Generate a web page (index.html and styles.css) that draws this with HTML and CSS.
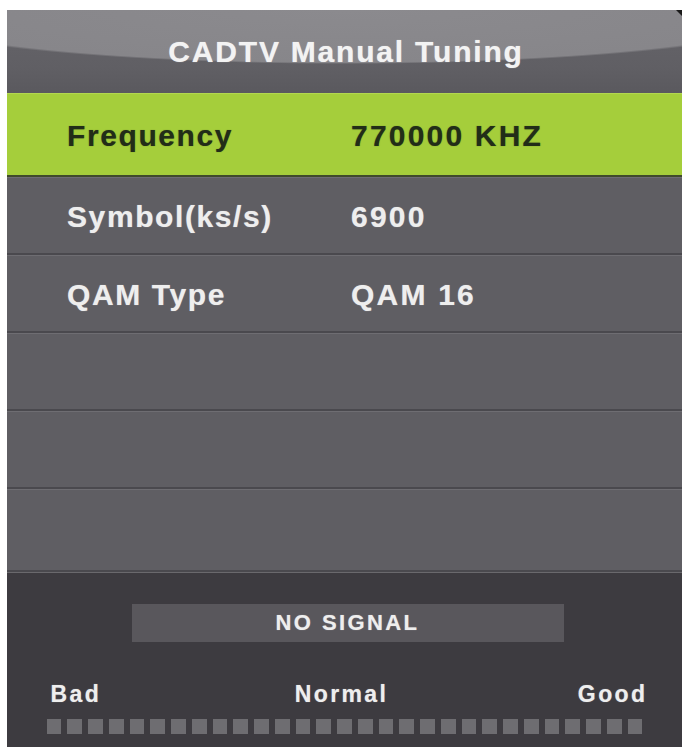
FILE: index.html
```html
<!DOCTYPE html>
<html lang="en">
<head>
<meta charset="utf-8">
<title>CADTV Manual Tuning</title>
<link rel="stylesheet" href="styles.css">
</head>
<body>
<div class="panel">
  <div class="header">CADTV Manual Tuning</div>
  <div class="row row-active">
    <span class="label">Frequency</span>
    <span class="value">770000 KHZ</span>
  </div>
  <div class="row">
    <span class="label">Symbol(ks/s)</span>
    <span class="value">6900</span>
  </div>
  <div class="row">
    <span class="label">QAM Type</span>
    <span class="value">QAM 16</span>
  </div>
  <div class="row"></div>
  <div class="row"></div>
  <div class="row row-last"></div>
  <div class="signal">
    <div class="signal-bar">NO SIGNAL</div>
    <div class="scale-labels">
      <span class="lbl-bad">Bad</span>
      <span class="lbl-normal">Normal</span>
      <span class="lbl-good">Good</span>
    </div>
    <div class="meter">
      <i></i><i></i><i></i><i></i><i></i><i></i><i></i><i></i><i></i><i></i>
      <i></i><i></i><i></i><i></i><i></i><i></i><i></i><i></i><i></i><i></i>
      <i></i><i></i><i></i><i></i><i></i><i></i><i></i><i></i><i></i>
    </div>
  </div>
</div>
</body>
</html>
```

FILE: styles.css
```css
html, body {
  margin: 0;
  padding: 0;
  background: #ffffff;
}

body {
  padding: 10px 0 0 7px;
  font-family: "Liberation Sans", Arial, sans-serif;
  font-weight: bold;
}

.panel {
  position: relative;
  width: 675px;
  height: 737px;
  display: flex;
  flex-direction: column;
  background: #5e5d62;
}

.panel::after {
  content: "";
  position: absolute;
  top: 0;
  right: 0;
  width: 0;
  height: 0;
  border-top: 6px solid #1a1a1a;
  border-left: 6px solid transparent;
}

.header {
  height: 84px;
  flex: none;
  display: flex;
  align-items: center;
  justify-content: center;
  box-sizing: border-box;
  padding-left: 3px;
  padding-top: 1px;
  font-size: 30px;
  letter-spacing: 1.8px;
  color: #f3f3f3;
  text-shadow: 0 0 1px rgba(255,255,255,0.6);
  background:
    radial-gradient(466px 54px at 50% 0, #8b8a8e 0, #87868a 97%, rgba(135,134,138,0) 100%),
    linear-gradient(#66656a, #605f64 70%, #5a595e);
  border-bottom: 1px solid #4f4e53;
}

.row {
  height: 78px;
  flex: none;
  box-sizing: border-box;
  display: grid;
  grid-template-columns: 284px 1fr;
  align-items: center;
  padding-left: 60px;
  padding-top: 4px;
  font-size: 30px;
  letter-spacing: 1.6px;
  color: #eeeeee;
  text-shadow: 0 0 1px rgba(255,255,255,0.5);
  background: #5f5e63;
  border-bottom: 2px solid #4a494e;
  box-shadow: inset 0 1px 0 #6e6d72;
}

.value {
  letter-spacing: 2.2px;
}

.row-active {
  height: 84px;
  margin-top: -1px;
  background: #a5ce3b;
  color: #222d18;
  text-shadow: 0 0 1px rgba(30,40,20,0.5);
  border-bottom: 2px solid #3f4a2c;
  box-shadow: inset 0 1px 0 #b3d84f;
}

.row-last {
  height: 83px;
  border-bottom: 2px solid #4a494e;
}

.signal {
  flex: 1;
  display: flex;
  flex-direction: column;
  align-items: center;
  background: #3d3b40;
  box-shadow: inset 0 1px 0 #6a696d;
  padding-top: 32px;
}

.signal-bar {
  width: 432px;
  height: 38px;
  margin-left: 6px;
  display: flex;
  align-items: center;
  justify-content: center;
  background: #59575c;
  color: #eeeeee;
  font-size: 22px;
  letter-spacing: 2.4px;
  text-shadow: 0 0 1px rgba(255,255,255,0.5);
}

.scale-labels {
  width: 600px;
  margin-top: 39px;
  display: flex;
  justify-content: space-between;
  align-items: center;
  font-size: 23px;
  line-height: 26px;
  letter-spacing: 2.4px;
  color: #eeeeee;
  text-shadow: 0 0 1px rgba(255,255,255,0.5);
}

.lbl-bad {
  padding-left: 6px;
}

.lbl-normal {
  margin-left: 4px;
}

.lbl-good {
  margin-right: -3px;
}

.meter {
  width: 596px;
  margin-top: 12px;
  display: grid;
  grid-template-columns: repeat(29, 1fr);
  column-gap: 6px;
}

.meter i {
  display: block;
  height: 15px;
  background: #6e6d71;
}
```
